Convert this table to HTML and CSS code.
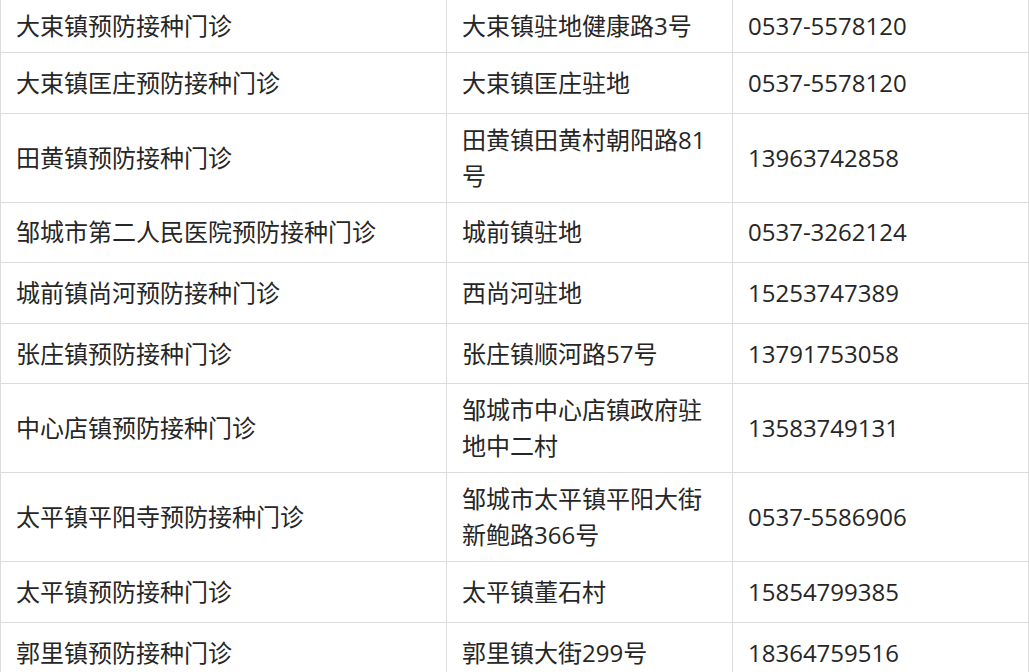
FILE: index.html
```html
<!DOCTYPE html>
<html lang="zh-CN">
<head>
<meta charset="utf-8">
<title>预防接种门诊</title>
<link rel="stylesheet" href="styles.css">
</head>
<body>
<table class="clinics">
  <colgroup>
    <col class="c-name">
    <col class="c-addr">
    <col class="c-tel">
  </colgroup>
  <tbody>
    <tr class="first"><td>大束镇预防接种门诊</td><td>大束镇驻地健康路3号</td><td>0537-5578120</td></tr>
    <tr><td>大束镇匡庄预防接种门诊</td><td>大束镇匡庄驻地</td><td>0537-5578120</td></tr>
    <tr><td>田黄镇预防接种门诊</td><td>田黄镇田黄村朝阳路81号</td><td>13963742858</td></tr>
    <tr><td>邹城市第二人民医院预防接种门诊</td><td>城前镇驻地</td><td>0537-3262124</td></tr>
    <tr><td>城前镇尚河预防接种门诊</td><td>西尚河驻地</td><td>15253747389</td></tr>
    <tr><td>张庄镇预防接种门诊</td><td>张庄镇顺河路57号</td><td>13791753058</td></tr>
    <tr><td>中心店镇预防接种门诊</td><td>邹城市中心店镇政府驻地中二村</td><td>13583749131</td></tr>
    <tr><td>太平镇平阳寺预防接种门诊</td><td>邹城市太平镇平阳大街新鲍路366号</td><td>0537-5586906</td></tr>
    <tr><td>太平镇预防接种门诊</td><td>太平镇董石村</td><td>15854799385</td></tr>
    <tr><td>郭里镇预防接种门诊</td><td>郭里镇大街299号</td><td>18364759516</td></tr>
  </tbody>
</table>
</body>
</html>
```
FILE: styles.css
```css
html, body {
  margin: 0;
  padding: 0;
  background: #ffffff;
}

body {
  font-family: "Open Sans", "Noto Sans CJK SC", sans-serif;
  color: #262626;
  overflow: hidden;
}

.clinics {
  border-collapse: collapse;
  table-layout: fixed;
  width: 1028px;
  margin-top: -1px;
  font-size: 24px;
  line-height: 36px;
}

.c-name { width: 446px; }
.c-addr { width: 286px; }
.c-tel { width: 296px; }

.clinics td {
  border: 1px solid #dcdcdc;
  padding: 8px 15px;
  vertical-align: middle;
  text-align: left;
}

.clinics tr {
  height: 60.6px;
}

.clinics tr.first {
  height: 52px;
}
```
